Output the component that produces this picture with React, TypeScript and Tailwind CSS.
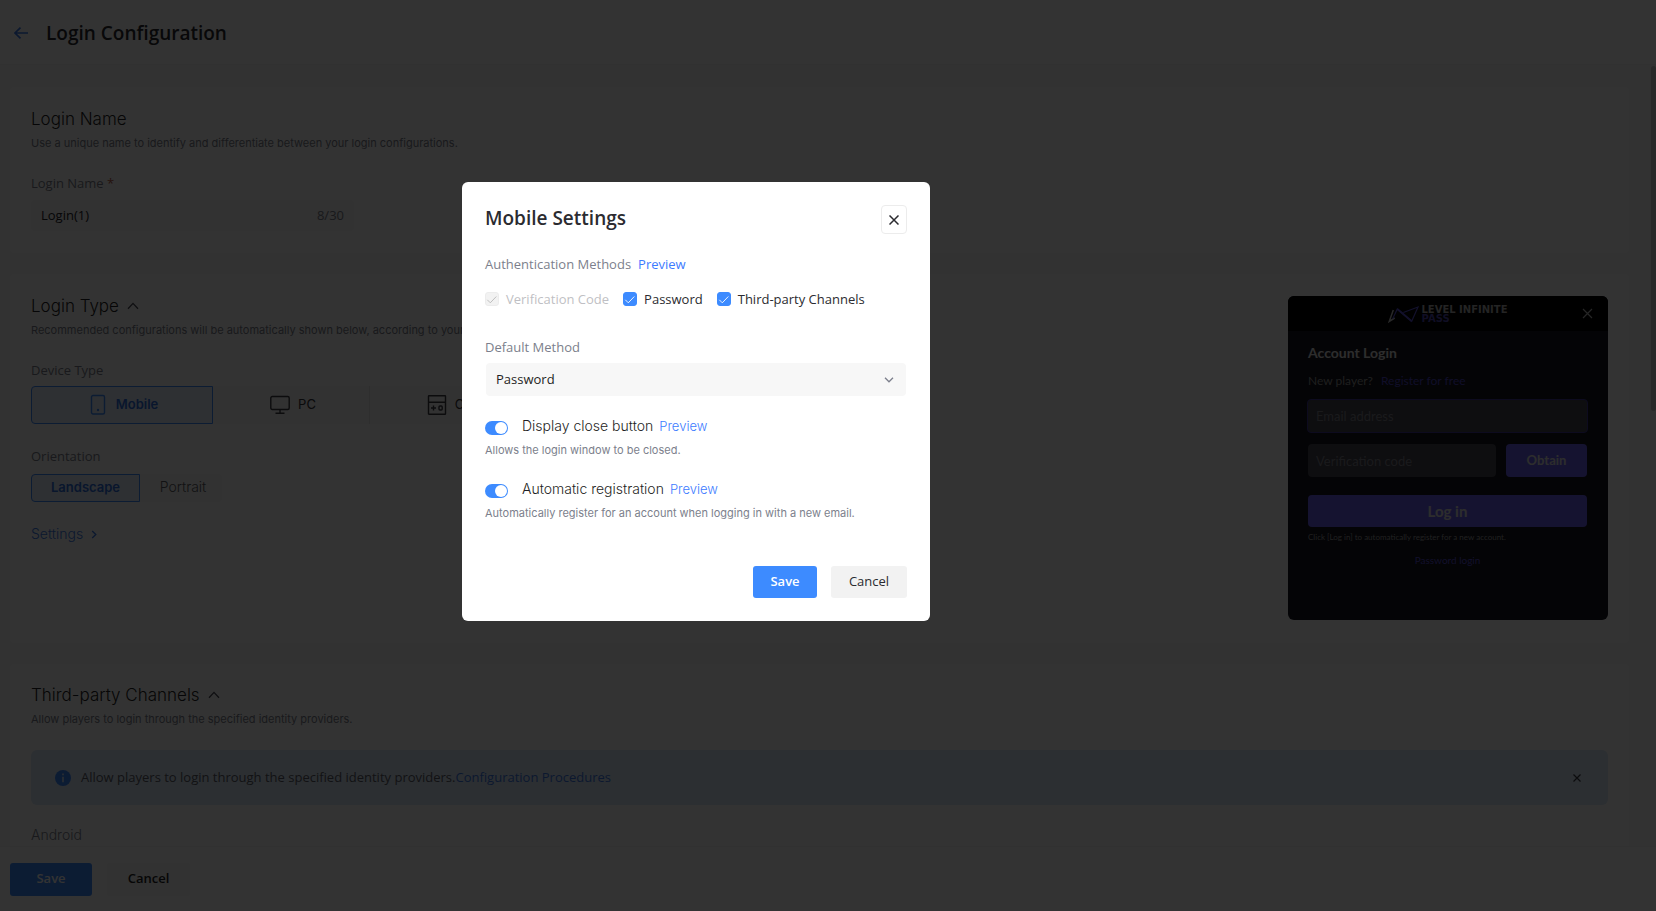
import { ReactNode, useState } from "react";

const ui = "font-['Open_Sans','Noto_Sans',sans-serif]";

function ChevronUp() {
  return (
    <svg viewBox="0 0 12 8" className="h-2 w-3" fill="none" stroke="#4b4b55" strokeWidth="1.3">
      <path d="M1 6.8 6 1.4l5 5.4" />
    </svg>
  );
}

function SectionTitle({ title, note, collapsible }: { title: string; note: string; collapsible?: boolean }) {
  return (
    <header>
      <h2 className="flex items-center gap-2 text-[17px] leading-6 font-light text-[#1f1f24]">
        {title}
        {collapsible && (
          <button type="button" aria-label={`Collapse ${title}`}>
            <ChevronUp />
          </button>
        )}
      </h2>
      <p className="mt-[2px] text-[11px] leading-5 whitespace-nowrap text-[#7c7f8c]">{note}</p>
    </header>
  );
}

function LoginNameCard() {
  const [name, setName] = useState("Login(1)");
  return (
    <section className="rounded bg-white px-[21px] pt-5 pb-[22px]">
      <SectionTitle title="Login Name" note="Use a unique name to identify and differentiate between your login configurations." />
      <label htmlFor="login-name" className={`mt-5 block text-[13px] leading-5 text-[#7c7f8c] ${ui}`}>
        Login Name <span className="text-[#b8604a]">*</span>
      </label>
      <div className={`mt-[7px] flex h-[31px] w-[323px] items-center rounded bg-[#f7f7f7] px-[10px] text-[13px] ${ui}`}>
        <input
          id="login-name"
          value={name}
          onChange={(e) => setName(e.target.value)}
          className="min-w-0 flex-1 bg-transparent text-[#24242a] outline-none"
        />
        <span className="text-[#7c7f8c]">{name.length}/30</span>
      </div>
    </section>
  );
}

function PhoneIcon() {
  return (
    <svg viewBox="0 0 16 22" className="h-[22px] w-4" fill="none" stroke="#3d8bff" strokeWidth="1.4">
      <rect x="1.5" y="1.5" width="13" height="18.5" rx="1.5" />
      <circle cx="8" cy="16" r="1.2" fill="#3d8bff" stroke="none" />
    </svg>
  );
}

function MonitorIcon() {
  return (
    <svg viewBox="0 0 20 20" className="h-5 w-5" fill="none" stroke="#3c3c44" strokeWidth="1.4">
      <rect x="0.8" y="1.5" width="18.4" height="13" rx="1.5" />
      <path d="M10 14.5v4M5.5 18.3h9" />
    </svg>
  );
}

function ConsoleIcon() {
  return (
    <svg viewBox="0 0 20 20" className="h-5 w-5 shrink-0" fill="none" stroke="#3c3c44" strokeWidth="1.4">
      <rect x="1.5" y="0.8" width="17" height="18.4" rx="0.5" />
      <path d="M1.5 7.2h17M4 13h5M6.5 10.5v5" />
      <rect x="12" y="11" width="3.2" height="4" rx="1" />
    </svg>
  );
}

function LogoMark() {
  return (
    <svg viewBox="0 0 32 18" className="h-[18px] w-8" fill="none">
      <path d="M5.3 5 1.2 16.5l5.500-3.500" stroke="#c8c8c8" strokeWidth="1.5" />
      <path d="M4.700 13.700 9.300 4 23.700 16.200 30 2 15.300 7.500" stroke="#5a50d8" strokeWidth="1.2" />
      <path d="M9.300 4 23.700 16.200" stroke="#5a50d8" strokeWidth="1.8" />
    </svg>
  );
}

function LoginPreview() {
  return (
    <div className="h-[324px] w-[320px] shrink-0 overflow-hidden rounded-md bg-[#14141e] font-[Lato,sans-serif]">
      <div className="grid h-[35px] grid-cols-[1fr_auto_1fr] items-center bg-black">
        <span />
        <div className="flex items-center gap-px">
          <LogoMark />
          <div className="font-['DejaVu_Sans',sans-serif] text-[10px] leading-[9px] font-bold text-[#b4b4b4]">
            LEVEL INFINITE
            <div className="text-[#5048b4]">PASS</div>
          </div>
        </div>
        <button type="button" aria-label="Close preview" className="mr-[15px] justify-self-end">
          <svg viewBox="0 0 11 11" className="h-[11px] w-[11px]" stroke="#bdbdbd" strokeWidth="1.2">
            <path d="m1 1 9 9M10 1l-9 9" />
          </svg>
        </button>
      </div>
      <div className="pt-3 pr-[21px] pl-5">
        <h3 className="text-sm leading-5 font-bold text-[#e0e0e0]">Account Login</h3>
        <p className="mt-2 text-xs leading-5 text-[#969696]">
          New player?
          <a href="#register" className="ml-2 text-[#5048c8]">
            Register for free
          </a>
        </p>
        <input
          aria-label="Email address"
          placeholder="Email address"
          className="-mx-px mt-2 block h-[34px] w-[281px] rounded border border-[#40389c] bg-[#45454f] px-2 text-[13px] outline-none placeholder:text-[#82828c]"
        />
        <div className="mt-[11px] flex gap-[10px]">
          <input
            aria-label="Verification code"
            placeholder="Verification code"
            className="h-[33px] min-w-0 flex-1 rounded bg-[#45454f] px-2 text-[13px] outline-none placeholder:text-[#82828c]"
          />
          <button type="button" className="h-[33px] w-[81px] rounded bg-[#6a62f0] text-[13px] font-bold text-[#e0e0e0]">
            Obtain
          </button>
        </div>
        <button type="button" className="mt-[18px] h-8 w-full rounded bg-[#6a62f0] text-[15px] font-bold text-[#e0e0e0]">
          Log in
        </button>
        <p className="mt-[2px] text-[8px] leading-4 text-[#a0a0a0]">Click [Log in] to automatically register for a new account.</p>
        <p className="mt-[5px] text-center text-[10px] leading-5">
          <a href="#password-login" className="text-[#5a50d2]">
            Password login
          </a>
        </p>
      </div>
    </div>
  );
}

function LoginTypeCard() {
  return (
    <section className="flex items-start justify-between rounded bg-white pr-[21px] pb-[23px] pl-[21px]">
      <div className="pt-5">
        <SectionTitle
          title="Login Type"
          note="Recommended configurations will be automatically shown below, according to your device type."
          collapsible
        />
        <h3 className={`mt-5 text-[13px] leading-5 text-[#7c7f8c] ${ui}`}>Device Type</h3>
        <div className="mt-[6px] flex h-[38px] w-[531px] rounded bg-[#f7f7f7] text-[13px] text-[#33333a]">
          <button
            type="button"
            aria-pressed="true"
            className="flex w-[182px] items-center justify-center gap-[10px] rounded-l border border-[#3d8bff] bg-[#e4efff] pb-px pl-1 font-semibold text-[#2f6fe0]"
          >
            <PhoneIcon />
            Mobile
          </button>
          <button type="button" className="flex w-[157px] items-center justify-center gap-2 border-r border-[#e4e4e4] pb-px pl-1">
            <MonitorIcon />
            PC
          </button>
          <button type="button" className="flex flex-1 items-center justify-center gap-2 pb-px">
            <ConsoleIcon />
            Console
          </button>
        </div>
        <h3 className={`mt-[22px] text-[13px] leading-5 text-[#7c7f8c] ${ui}`}>Orientation</h3>
        <div className="mt-2 flex h-7 w-[191px] rounded bg-[#f7f7f7] text-[13px] text-[#5a5a64]">
          <button
            type="button"
            aria-pressed="true"
            className="w-[109px] rounded-l border border-[#3d8bff] bg-[#e4efff] font-semibold text-[#2f6fe0]"
          >
            Landscape
          </button>
          <button type="button" className="flex-1 pb-[2px] pl-1 text-sm font-light">
            Portrait
          </button>
        </div>
        <a href="#settings" className="mt-[22px] flex items-center gap-2 text-sm leading-5 font-light text-[#3d7be8]">
          Settings
          <svg viewBox="0 0 6 10" className="h-[9px] w-[6px]" fill="none" stroke="currentColor" strokeWidth="1.5">
            <path d="m1 1 4 4-4 4" />
          </svg>
        </a>
      </div>
      <div className="pt-[22px]">
        <LoginPreview />
      </div>
    </section>
  );
}

function ChannelsCard() {
  return (
    <section className="rounded-t bg-white px-[21px] pt-[19px] pb-5">
      <SectionTitle
        title="Third-party Channels"
        note="Allow players to login through the specified identity providers."
        collapsible
      />
      <div className={`mt-[21px] flex h-[55px] items-center rounded-md bg-[#dce9fa] px-6 text-[13px] ${ui}`}>
        <svg viewBox="0 0 16 16" className="mr-[10px] h-4 w-4 shrink-0">
          <circle cx="8" cy="8" r="8" fill="#3d8bff" />
          <path d="M8 3.5v1.8M8 6.8v5.4" stroke="#dce9fa" strokeWidth="1.6" />
        </svg>
        <p className="flex-1 text-[#5a5d66]">
          Allow players to login through the specified identity providers.
          <a href="#procedures" className="text-[#3d7be8]">
            Configuration Procedures
          </a>
        </p>
        <button type="button" aria-label="Dismiss notice" className="mr-[3px]">
          <svg viewBox="0 0 8 8" className="h-2 w-2" stroke="#3c3c44" strokeWidth="1.2">
            <path d="m0.5 0.5 7 7M7.5 0.5l-7 7" />
          </svg>
        </button>
      </div>
      <h3 className="mt-5 text-sm leading-5 font-light text-[#7c7f8c]">Android</h3>
    </section>
  );
}

function Check({ id, label, disabled }: { id: string; label: string; disabled?: boolean }) {
  return (
    <div className="flex items-center gap-[7px]">
      <span className="relative flex h-[14px] w-[14px]">
        <input
          id={id}
          type="checkbox"
          defaultChecked
          disabled={disabled}
          className="peer h-[14px] w-[14px] appearance-none rounded-[3px] border border-[#d8d8d8] checked:border-[#3d8bff] checked:bg-[#3d8bff] disabled:border-[#ececec] disabled:bg-[#f2f2f2]"
        />
        <svg
          viewBox="0 0 14 14"
          className="pointer-events-none absolute inset-0 hidden text-white peer-checked:block peer-disabled:text-[#b8b8b8]"
          fill="none"
          stroke="currentColor"
          strokeWidth="0.9"
        >
          <path d="m2.300 7.800 3 3 6-6.300" />
        </svg>
      </span>
      <label htmlFor={id} className={disabled ? "text-[#bfbfc4]" : "text-[#2b2b30]"}>
        {label}
      </label>
    </div>
  );
}

function Toggle({ id, label, note }: { id: string; label: string; note: string }) {
  return (
    <div>
      <div className="flex items-center text-sm leading-5">
        <input
          id={id}
          type="checkbox"
          role="switch"
          defaultChecked
          className="mt-[3px] mr-[14px] flex h-[14px] w-[23px] appearance-none items-center rounded-full bg-[#c8c8c8] px-[1px] before:h-3 before:w-3 before:rounded-full before:bg-white checked:justify-end checked:bg-[#3d8bff]"
        />
        <label htmlFor={id} className="font-light text-[#1f1f24]">
          {label}
        </label>
        <a href="#preview" className="ml-[6px] text-[13px] font-light text-[#3d7bff]">
          Preview
        </a>
      </div>
      <p className="mt-1 text-[11px] leading-5 text-[#7c7f8c]">{note}</p>
    </div>
  );
}

function Backdrop({ children }: { children: ReactNode }) {
  return <div className="fixed inset-0 z-10 flex items-center justify-center bg-black/80 pr-[264px] pb-[108px]">{children}</div>;
}

function MobileSettings() {
  return (
    <div role="dialog" aria-modal="true" aria-labelledby="dialog-title" className="w-[468px] rounded-md bg-white p-[23px]">
      <div className="flex items-start justify-between">
        <h2 id="dialog-title" className={`text-[19px] leading-[26px] font-semibold text-[#2b2b30] ${ui}`}>
          Mobile Settings
        </h2>
        <button
          type="button"
          aria-label="Close"
          className="flex h-[29px] w-[26px] items-center justify-center rounded border border-[#ececec]"
        >
          <svg viewBox="0 0 10 10" className="h-[10px] w-[10px]" stroke="#2b2b30" strokeWidth="1.5">
            <path d="m0.5 0.5 9 9M9.5 0.5l-9 9" />
          </svg>
        </button>
      </div>
      <p className={`mt-5 text-[13px] leading-5 text-[#7c7f8c] ${ui}`}>
        Authentication Methods
        <a href="#preview" className="ml-[7px] text-[#3d7bff]">
          Preview
        </a>
      </p>
      <div className={`mt-[15px] flex gap-[14px] text-[13px] leading-5 ${ui}`}>
        <Check id="verification" label="Verification Code" disabled />
        <Check id="password" label="Password" />
        <Check id="third-party" label="Third-party Channels" />
      </div>
      <label htmlFor="method" className={`mt-7 block text-[13px] leading-5 text-[#7c7f8c] ${ui}`}>
        Default Method
      </label>
      <div className="relative mx-px mt-[6px]">
        <select
          id="method"
          defaultValue="Password"
          className={`block h-[33px] w-full appearance-none rounded bg-[#f7f7f7] px-[10px] text-[13px] text-[#1f1f24] outline-none ${ui}`}
        >
          <option>Password</option>
          <option>Verification Code</option>
        </select>
        <svg
          viewBox="0 0 10 6"
          className="pointer-events-none absolute top-[14px] right-3 h-[6px] w-[10px]"
          fill="none"
          stroke="#7c7f8c"
          strokeWidth="1.3"
        >
          <path d="m1 0.8 4 4 4-4" />
        </svg>
      </div>
      <div className="mt-5 flex flex-col gap-[19px]">
        <Toggle id="close-button" label="Display close button" note="Allows the login window to be closed." />
        <Toggle
          id="auto-register"
          label="Automatic registration"
          note="Automatically register for an account when logging in with a new email."
        />
      </div>
      <div className={`mt-[43px] flex justify-end gap-[14px] text-[13px] ${ui}`}>
        <button type="button" className="h-8 w-16 rounded-[3px] bg-[#3d8bff] font-semibold text-white">
          Save
        </button>
        <button type="button" className="h-8 w-[76px] rounded-[3px] bg-[#f2f2f2] text-[#2b2b30]">
          Cancel
        </button>
      </div>
    </div>
  );
}

export default function App() {
  return (
    <div className="flex h-screen flex-col overflow-hidden bg-[#f9f9f9] font-[Inter,sans-serif]">
      <header className="flex h-[65px] shrink-0 items-center gap-[18px] border-b border-[#f5f5f5] bg-white pt-px pl-[14px]">
        <a href="#back" aria-label="Back">
          <svg viewBox="0 0 14 12" className="h-3 w-[14px]" fill="none" stroke="#3d7be8" strokeWidth="1.7">
            <path d="M14 6H1M6.5 0.6 1 6l5.5 5.4" />
          </svg>
        </a>
        <h1 className={`text-[19px] leading-6 font-semibold text-[#2b2b30] ${ui}`}>Login Configuration</h1>
      </header>
      <div className="flex min-h-0 flex-1 items-start">
        <main className="flex h-full min-w-0 flex-1 flex-col gap-[21px] overflow-hidden pt-[22px] pr-[22px] pl-[10px] [&>section]:shrink-0">
          <LoginNameCard />
          <LoginTypeCard />
          <ChannelsCard />
        </main>
        <div className="mt-px h-[345px] w-[5px] rounded-full bg-[#cdcdcd]" />
      </div>
      <footer className={`flex h-[65px] shrink-0 items-center gap-[15px] border-t border-[#f5f5f5] bg-white pl-[10px] text-[13px] font-semibold ${ui}`}>
        <button type="button" className="h-[33px] w-[82px] rounded-[3px] bg-[#3d8bff] text-white">
          Save
        </button>
        <button type="button" className="h-[33px] w-[83px] rounded-[3px] bg-[#f7f7f7] text-[#1f1f24]">
          Cancel
        </button>
      </footer>
      <Backdrop>
        <MobileSettings />
      </Backdrop>
    </div>
  );
}
